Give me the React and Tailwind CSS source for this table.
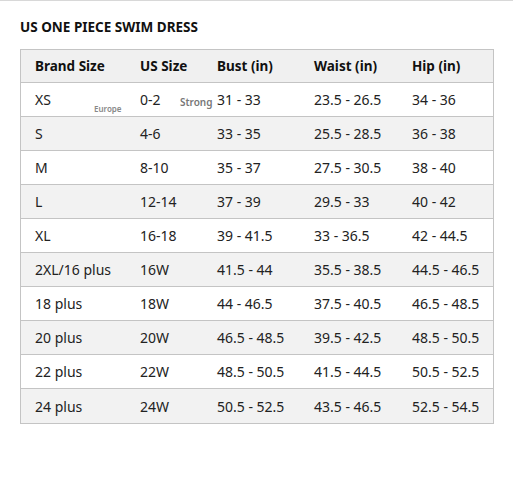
import React from "react";

const rows = [
  ["XS", "0-2", "31 - 33", "23.5 - 26.5", "34 - 36"],
  ["S", "4-6", "33 - 35", "25.5 - 28.5", "36 - 38"],
  ["M", "8-10", "35 - 37", "27.5 - 30.5", "38 - 40"],
  ["L", "12-14", "37 - 39", "29.5 - 33", "40 - 42"],
  ["XL", "16-18", "39 - 41.5", "33 - 36.5", "42 - 44.5"],
  ["2XL/16 plus", "16W", "41.5 - 44", "35.5 - 38.5", "44.5 - 46.5"],
  ["18 plus", "18W", "44 - 46.5", "37.5 - 40.5", "46.5 - 48.5"],
  ["20 plus", "20W", "46.5 - 48.5", "39.5 - 42.5", "48.5 - 50.5"],
  ["22 plus", "22W", "48.5 - 50.5", "41.5 - 44.5", "50.5 - 52.5"],
  ["24 plus", "24W", "50.5 - 52.5", "43.5 - 46.5", "52.5 - 54.5"],
];

const headers = ["Brand Size", "US Size", "Bust (in)", "Waist (in)", "Hip (in)"];
const widths = ["w-[105px]", "w-[77px]", "w-[97px]", "w-[98px]", "w-auto"];

export default function App() {
  return (
    <div
      className="w-[513px] h-[477px] bg-white border-t border-[#d8d8d8] text-[#222]"
      style={{ fontFamily: '"Noto Sans", "Open Sans", sans-serif' }}
    >
      <div className="pl-[20px] pt-[17px] pr-[19px]">
        <h1 className="text-[13.5px] font-bold leading-[18px] text-[#111]">
          US ONE PIECE SWIM DRESS
        </h1>
        <div className="relative mt-[13px] border border-[#c4c4c4] w-[474px]">
          <div className="flex h-[33px] items-center bg-[#f0f0f0] border-b border-[#c4c4c4] pl-[14px] text-[13.5px] font-bold text-[#111]">
            {headers.map((h, i) => (
              <div key={h} className={widths[i]}>{h}</div>
            ))}
          </div>
          {rows.map((r, ri) => (
            <div
              key={ri}
              className={`flex h-[34px] items-center pl-[14px] text-[14px] text-[#222] ${ri < rows.length - 1 ? "border-b border-[#c4c4c4]" : ""} ${ri % 2 === 1 ? "bg-[#f2f2f2]" : "bg-white"}`}
            >
              {r.map((c, ci) => (
                <div key={ci} className={widths[ci]}>{c}</div>
              ))}
            </div>
          ))}
          <span className="absolute left-[73px] top-[53px] text-[8px] font-semibold text-[#888]">Europe</span>
          <span className="absolute left-[159px] top-[45px] text-[10px] font-semibold text-[#777]">Strong</span>
        </div>
      </div>
    </div>
  );
}
